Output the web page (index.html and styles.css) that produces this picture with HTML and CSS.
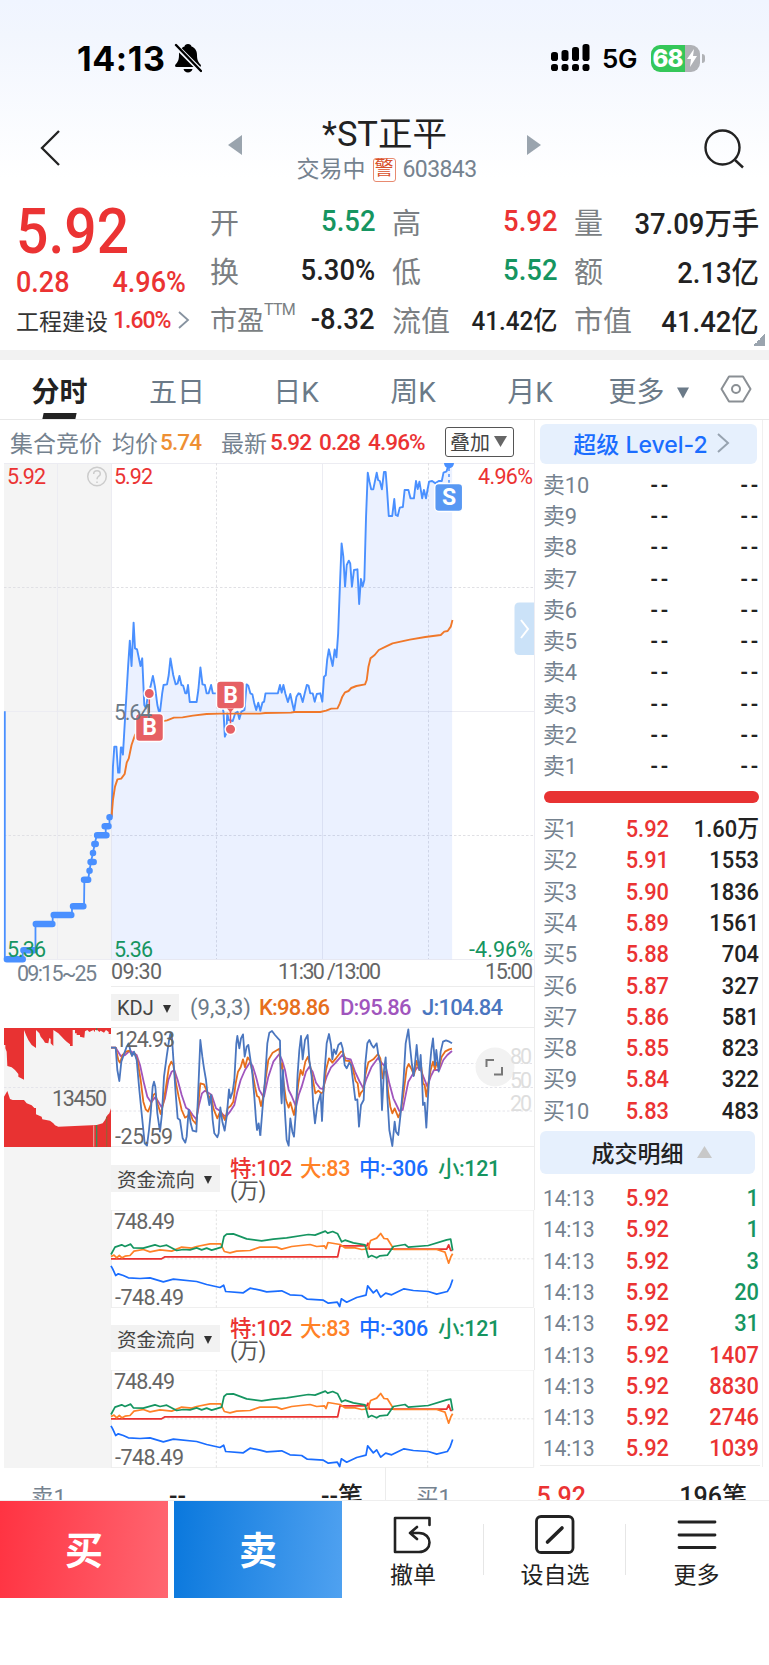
FILE: index.html
```html
<!DOCTYPE html>
<html lang="zh-CN">
<head>
<meta charset="utf-8">
<title>*ST正平 603843</title>
<link rel="stylesheet" href="styles.css">
</head>
<body>
<div class="app">
<header class="top">
  <div class="status">
    <span class="clock">14:13</span>
    <svg class="bell" width="28" height="30" viewBox="0 0 28 30"><path d="M14 1c2 0 3.300 1.200 3.500 2.600C21.500 5 23 8.500 23 12c0 5.500 1.600 7.500 3.500 9.500.8 1 .5 2.500-1 2.500h-23c-1.500 0-1.800-1.500-1-2.500C3.400 19.500 5 17.500 5 12c0-3.500 1.500-7 5.500-8.400C10.700 2.200 12 1 14 1zM9.500 26h9c-.5 2.200-2.300 3.500-4.500 3.500S10 28.200 9.500 26z"/><path d="M1 2l26 26" stroke="#f5f8fe" stroke-width="5"/><path d="M2 2l25 26" stroke="#000" stroke-width="2.400" stroke-linecap="round"/></svg>
    <svg class="signal" width="40" height="28" viewBox="0 0 40 28"><rect x="0" y="8" width="7" height="9" rx="2.800"/><rect x="10.500" y="6" width="7" height="11" rx="2.800"/><rect x="21" y="3" width="7" height="14" rx="2.800"/><rect x="31.500" y="0" width="7" height="17" rx="2.800"/><rect x="0" y="20" width="7" height="7" rx="2.800"/><rect x="10.500" y="20" width="7" height="7" rx="2.800"/><rect x="21" y="20" width="7" height="7" rx="2.800"/><rect x="31.500" y="20" width="7" height="7" rx="2.800"/></svg>
    <span class="net">5G</span>
    <div class="battery"><span>68</span><svg width="12" height="18" viewBox="0 0 12 18"><path d="M8 0L1 10h4l-1 8 7-11H7z" fill="#fff"/></svg></div>
  </div>
  <div class="title-bar">
    <svg class="back" width="22" height="38" viewBox="0 0 22 38"><path d="M20 2L3 19l17 17" fill="none" stroke="#222" stroke-width="2.300"/></svg>
    <svg class="prev" width="14" height="20" viewBox="0 0 14 20"><path d="M0 10L14 0v20z" fill="#9aa4ae"/></svg>
    <div class="name"><h1>*ST正平</h1><p><span>交易中</span><b>警</b><i>603843</i></p></div>
    <svg class="next" width="14" height="20" viewBox="0 0 14 20"><path d="M14 10L0 0v20z" fill="#9aa4ae"/></svg>
    <svg class="search" width="42" height="42" viewBox="0 0 42 42"><g fill="none" stroke="#222" stroke-width="2.400"><circle cx="19.500" cy="19.500" r="17"/><path d="M32 32l8 7.500"/></g></svg>
  </div>
</header>

<section class="quote">
  <div class="main">
    <div class="price">5.92</div>
    <div class="change"><span>0.28</span><span>4.96%</span></div>
    <div class="sector"><span>工程建设</span><i>1.60%</i><svg width="12" height="18" viewBox="0 0 12 18"><path d="M1 1l9 8-9 8" fill="none" stroke="#8793a0" stroke-width="1.800"/></svg></div>
  </div>
  <dl class="stats">
    <div><dt>开</dt><dd class="dn">5.52</dd></div><div><dt>高</dt><dd class="up">5.92</dd></div><div><dt>量</dt><dd>37.09万手</dd></div>
    <div><dt>换</dt><dd>5.30%</dd></div><div><dt>低</dt><dd class="dn">5.52</dd></div><div><dt>额</dt><dd>2.13亿</dd></div>
    <div><dt class="pe">市盈<sup>TTM</sup></dt><dd>-8.32</dd></div><div><dt>流值</dt><dd class="sm">41.42亿</dd></div><div><dt>市值</dt><dd>41.42亿</dd></div>
  </dl>
  <span class="corner"></span>
</section>

<nav class="tabs">
  <a class="on">分时</a><a>五日</a><a>日K</a><a>周K</a><a>月K</a><a>更多<svg width="12" height="12" viewBox="0 0 13 12"><path d="M0 0h13L6.500 12z" fill="#6b7a88"/></svg></a>
  <svg class="gear" width="32" height="28" viewBox="0 0 32 28"><g fill="none" stroke="#8a8f94" stroke-width="2"><path d="M9 1.500h14L30.500 14 23 26.500H9L1.500 14z" stroke-linejoin="round"/><circle cx="16" cy="14" r="4"/></g></svg>
</nav>

<main class="body">
<div class="left">
  <div class="info"><span class="w1">集合竞价</span><span class="w2">均价</span><b class="avg">5.74</b><span class="w3">最新</span><b class="n1">5.92</b><b class="n2">0.28</b><b class="n3">4.96%</b><button>叠加<svg width="13" height="11" viewBox="0 0 13 11"><path d="M0 0h13L6.500 11z" fill="#666"/></svg></button></div>
  <svg class="chart" width="535" height="523" viewBox="0 463 535 523">
    <rect x="4" y="463" width="107" height="497" fill="#f4f4f4"/>
    <g stroke="#ececf2" fill="none"><path d="M4 463.500H534M4 711.500H534M4 959.500H534M57.500 463V959M111.500 463V959M322.500 463V959M534.500 463V986"/><path d="M4 587.500H534M4 835.500H534M216.500 463V959M428.500 463V959" stroke="#e0e0e4" stroke-dasharray="2.500 2"/></g>
    <g transform="translate(0 400) scale(.344353 .333333)" fill="none" stroke-linejoin="round">
      <path fill="#4a80ff" fill-opacity=".11" d="M324 1250L328 1100 332 1040 338 1040 343 1118 347 1118 351 1042 357 1064 364 940 372 800 377 722 382 798 388 668 392 745 398 748 408 798 413 775 419 915 424 925 437 860 444 828 450 860 461 933 465 933 475 855 485 853 495 775 503 825 510 853 521 828 527 855 538 880 546 855 551 906 571 906 582 802 588 853 600 880 613 855 618 880 636 880 649 935 653 1010 660 940 676 963 690 935 710 930 716 853 727 880 744 930 750 908 756 932 771 880 807 880 818 860 829 882 836 906 843 882 854 933 867 880 879 906 891 855 901 880 914 905 936 905 941 830 955 748 966 798 972 748 977 772 982 700 992 430 1002 560 1013 482 1022 560 1028 510 1038 508 1043 612 1048 537 1058 540 1063 350 1068 218 1078 268 1084 268 1094 218 1109 268 1115 216 1120 216 1129 348 1139 348 1145 297 1155 348 1170 321 1175 270 1202 295 1208 243 1226 295 1246 245 1283 243 1303 190H1313V1678H324z"/>
      <path vector-effect="non-scaling-stroke" stroke="#4a90ff" stroke-width="1.900" d="M324 1250L328 1100 332 1040 338 1040 343 1118 347 1118 351 1042 353 1042 357 1064 364 940 372 800 377 722 382 798 388 668 392 745 398 748 408 798 413 775 419 915 424 925 430 880 437 860 444 828 450 860 457 915 461 933 465 933 471 880 475 855 485 853 490 825 495 775 503 825 510 853 516 850 521 828 527 855 532 857 538 880 542 880 546 855 551 906 571 906 576 870 582 802 588 853 595 855 600 880 606 880 613 855 618 880 627 880 636 880 642 906 649 935 653 1010 657 1000 660 940 664 960 676 963 683 940 690 935 695 957 701 935 710 930 716 853 721 857 727 880 733 883 738 908 744 930 750 908 756 932 762 908 767 905 771 880 807 880 813 855 818 878 823 855 829 882 836 906 843 882 848 906 854 933 861 890 867 880 872 882 879 906 885 880 891 855 896 857 901 880 908 880 914 905 920 882 930 880 936 905 941 830 946 826 950 780 955 748 966 798 972 748 977 772 982 700 987 560 992 430 997 470 1002 560 1007 495 1013 482 1017 490 1022 560 1028 510 1038 508 1043 612 1048 537 1053 560 1058 540 1063 350 1068 218 1073 245 1078 268 1084 268 1094 218 1098 240 1103 243 1109 268 1115 216 1120 216 1124 270 1129 348 1139 348 1145 297 1149 345 1155 348 1161 323 1170 321 1175 270 1186 270 1192 295 1202 295 1208 243 1213 267 1218 245 1226 295 1231 270 1237 295 1246 245 1255 243 1264 250 1274 243 1283 243 1288 218 1297 214 1303 192"/>
      <path vector-effect="non-scaling-stroke" stroke="#f0782a" stroke-width="1.900" d="M324 1250L328 1200 334 1160 341 1138 352 1136 362 1122 368 1088 374 1075 382 1035 392 1005 405 985 440 970 485 961 505 953 530 952 560 947 600 942 640 941 755 941 770 939 845 938 855 936 930 936 947 932 962 926 980 925 987 910 994 890 1002 877 1012 873 1020 864 1035 858 1060 853 1065 840 1070 800 1076 775 1088 765 1100 750 1120 740 1140 730 1190 719 1235 711 1280 705 1290 695 1300 693 1309 680 1314 660"/>
      <path vector-effect="non-scaling-stroke" stroke="#4a90ff" stroke-width="1.800" d="M14 934V1678H66V1651H103V1572H153V1545H209V1519H244L245 1439H256L260 1412 264 1386 270 1359 275 1332 281 1306H307V1279H318V1252"/>
      <path vector-effect="non-scaling-stroke" stroke="#4a90ff" stroke-width="6.500" stroke-linecap="round" d="M20 1678H66M68 1651H100M104 1572H152M156 1545H207M212 1519H242M244 1439H256M260 1412h.1M263 1386H272M270 1359h.1M274 1332H278M282 1306H309M304 1279H315M318 1252h.1"/>
    </g>
    <g fill="none" stroke="#ccc" stroke-width="1.500"><circle cx="97" cy="476.500" r="9.300"/><path d="M93.700 474c0-4.200 6.600-4.200 6.600 0 0 2.500-3.300 2-3.300 5.200M97 481.500v1.600"/></g>
    <g fill="#e66064" stroke="#fff" stroke-width="1.500"><path d="M149.300 694v20" stroke="#e5565b"/><circle cx="149.300" cy="693.500" r="5.200"/><rect x="135.500" y="713.500" width="28" height="28" rx="4"/><path d="M230.500 710v20" stroke="#e5565b"/><circle cx="230.500" cy="729.300" r="5.300"/><rect x="216.500" y="681" width="28" height="28" rx="4"/><path d="M227 708.500h7l-3.500 4z" stroke="none"/></g>
    <path d="M444 463h10c0 3-2 5-5 5.500-3-.5-5-2.500-5-5.500z" fill="#4a90ff"/><path d="M449 468v16" stroke="#4a90ff" stroke-width="1.500" stroke-dasharray="3 3"/>
    <rect x="434.700" y="483.500" width="28" height="28" rx="4" fill="#5898f3" stroke="#fff" stroke-width="1.500"/>
    <g class="axis">
      <text x="7" y="484" class="r" textLength="39">5.92</text><text x="114" y="484" class="r" textLength="39">5.92</text><text x="478" y="484" class="r" textLength="55">4.96%</text>
      <text x="114" y="720" textLength="38" fill="#6b7a88">5.64</text>
      <text x="7" y="957" class="g" textLength="39">5.36</text><text x="114" y="957" class="g" textLength="39">5.36</text><text x="469" y="957" class="g" textLength="64">-4.96%</text>
      <text x="17" y="981" fill="#75828f" textLength="80">09:15~25</text><text x="111" y="979" textLength="51">09:30</text><text x="278" y="979" textLength="103">11:30 /13:00</text><text x="485" y="979" textLength="48">15:00</text>
    </g>
    <g class="mark"><text x="149.500" y="735">B</text><text x="230.500" y="702.500">B</text><text x="449" y="504.500">S</text></g>
    <path d="M534 602.500H519.500q-5 0-5 5V650q0 5 5 5H534z" fill="#cbe2f8"/><path d="M521 620l7 9-7 9" fill="none" stroke="#fff" stroke-width="2"/>
  </svg>

  <div class="kdj-head"><span class="chip">KDJ<em></em></span><span class="p">(9,3,3)</span><span class="k">K:98.86</span><span class="d">D:95.86</span><span class="j">J:104.84</span></div>
  <svg class="chart" width="535" height="120" viewBox="0 1027 535 120">
    <rect x="4" y="1028" width="107" height="119" fill="#f4f4f4"/>
    <path d="M111 1027.500H534M111 1146.500H534M534.500 1027V1147" stroke="#ececec"/>
    <path d="M4 1087.500H534M111 1063.500H534M111 1111H534" stroke="#e4e4ea" stroke-dasharray="2.500 2"/>
    <g transform="translate(0 980) scale(.333333)" fill="none" stroke-linejoin="round">
      <path fill="#e83232" d="M12 144H333V162H326V156L318 150 312 158 302 152 298 156 292 150H285V157L280 150 268 156 262 150 255 154 253 173 240 170V165H230V160H225V150H218V198H210V193L200 185 192 178 185 170 175 160 160 150V198L152 190V177L148 174 145 190 135 188 130 180 122 170 118 160 108 150V204L95 195 85 180 78 165 72 150V299L55 290V282L45 270 35 262 22 258 20 215 16 205V195H12zM12 350L22 333 26 345 30 357 38 360H72L80 370 95 376 103 384H108V403L125 410 127 418 150 422 160 430 165 436 175 440 290 435 308 430 315 420 322 406 328 400 333 385V501H12z"/>
      <path d="M290 145v6M290 435V500" stroke="#3d8a56" stroke-width="4"/><path d="M281 436V500" stroke="#e8938d" stroke-width="4"/><path d="M320 410V500" stroke="#a05a36" stroke-width="4"/>
      <g stroke-width="5.400">
      <path stroke="#a055bd" d="M333 203H347L362 228 375 225 390 212 402 220 410 225 420 255 432 310 442 350 453 367 465 352 475 365 485 382 495 355 505 300 515 275 523 270 533 300 545 345 558 383 568 390 578 405 589 418 597 375 606 340 615 332 625 338 635 345 648 385 660 393 670 405 678 410 690 395 703 375 712 335 722 300 735 270 750 247 758 258 768 290 778 330 790 350"/>
      <path stroke="#a055bd" transform="translate(780)" d="M8 350H12L25 290 40 245 58 222 66 240 75 270 86 330 95 348 108 380 116 345 125 320 138 275 148 260 158 275 168 308 180 325 188 327 200 290 213 262 225 250 248 224 258 235 272 238 285 275 298 303 310 325 320 295 335 260 354 234 368 252 378 262 388 310 400 355 418 393 428 390 436 350 445 305 460 280 472 262 482 268 490 290 502 320 512 290 522 270 538 270 550 240 562 225 576 213"/>
      <path stroke="#e66e1c" d="M333 203H347L355 240 360 248 368 225 378 215 388 212 396 225 404 220 412 240 422 300 430 365 437 388 444 395 452 375 460 345 466 340 474 375 482 402 490 370 498 320 507 260 514 245 520 255 528 310 536 350 545 390 555 413 563 408 570 398 578 420 588 432 595 370 601 310 612 313 619 330 627 355 633 345 640 385 652 415 661 393 675 420 683 385 692 378 700 365 707 310 714 275 722 262 729 238 735 262 743 232 750 242 757 275 765 320 771 348 777 352 783 378 788 360"/>
      <path stroke="#e66e1c" transform="translate(780)" d="M3 378L8 360 15 310 25 240 38 218 58 206 63 265 66 250 70 300 78 360 86 383 91 367 102 405 108 370 115 310 122 270 128 285 136 245 144 230 150 255 158 295 166 340 175 332 184 340 190 335 198 270 207 235 217 248 228 235 243 215 249 215 256 242 268 243 278 265 287 303 293 310 298 350 303 338 310 330 316 285 325 247 340 238 354 222 361 235 368 295 373 275 378 275 385 340 391 380 397 400 404 385 415 412 422 395 430 345 440 265 446 252 455 268 462 285 470 243 478 270 484 262 489 310 494 315 499 350 505 310 512 270 519 245 525 268 530 248 537 265 545 230 556 214 568 208 576 206"/>
      <path stroke="#4a76bf" d="M333 203H347L352 270 358 303 364 245 370 228 380 200 386 190 392 215 396 228 402 215 410 240 418 330 428 430 434 490 441 497 447 450 452 400 458 320 462 305 466 320 472 400 480 455 486 400 492 290 500 230 508 175 512 158 516 175 521 250 527 340 533 415 540 420 548 475 556 488 560 470 566 390 572 430 578 452 589 455 594 350 601 180 607 230 612 265 618 300 623 345 628 375 633 345 638 420 643 460 652 472 656 460 661 382 667 425 674 452 680 410 687 328 691 355 698 335 703 300 709 190 712 168 718 205 723 175 729 163 734 230 740 200 745 195 750 230 757 280 763 350 768 420 771 450 776 430 781 467"/>
      <path stroke="#4a76bf" transform="translate(780)" d="M1 467L8 380 15 300 22 190 28 158 36 153 45 165 60 182 63 340 65 370 69 270 75 400 80 480 86 497 91 415 97 455 102 470 108 390 113 280 118 210 123 168 128 238 135 180 143 165 148 240 155 290 160 380 165 430 172 375 182 342 186 423 192 300 200 190 207 162 213 195 217 238 222 208 228 222 235 195 243 188 248 205 254 255 260 265 268 248 273 255 280 310 286 360 292 358 297 440 303 375 311 360 316 250 322 190 328 180 335 195 341 203 350 190 355 225 361 250 366 390 372 270 377 232 382 350 388 450 397 498 404 425 408 455 415 465 422 400 430 310 437 190 445 148 450 200 456 255 461 288 466 240 470 195 474 240 478 270 482 225 487 320 489 375 494 368 499 443 504 350 509 265 514 210 519 175 525 255 529 210 536 275 542 215 549 185 558 181 568 185 576 190"/>
      </g>
    </g>
    <circle cx="495" cy="1067" r="19.500" fill="#f2f2f2"/>
    <g class="axis"><text x="115" y="1047" textLength="60">124.93</text><text x="115" y="1144" textLength="58">-25.59</text><text x="52" y="1106" textLength="55">13450</text><g fill="#dedede"><text x="510" y="1063.500" textLength="22">80</text><text x="510" y="1087.500" textLength="22">50</text><text x="510" y="1111" textLength="22">20</text></g></g>
    <path d="M486.500 1067v-7h7.500M502 1067v7.500h-8" fill="none" stroke="#777" stroke-width="2"/>
  </svg>

  <div class="fund"><span class="chip">资金流向<em></em></span><p><b class="c1">特:102</b><b class="c2">大:83</b><b class="c3">中:-306</b><b class="c4">小:121</b><span>(万)</span></p></div>
  <svg class="chart flow" width="535" height="98" viewBox="0 1209.500 535 98">
    <defs><g id="flow">
      <path d="M33 178.500H1301M33 471.500H1301M34 178V471M667 178V471M1301 178V471" stroke="#ececec" stroke-width="3"/>
      <path d="M33 325H1300M349 178V471M983 178V471" stroke="#e2e2e2" stroke-width="3" stroke-dasharray="7 6"/>
      <g fill="none" stroke-width="5.200" stroke-linejoin="round">
      <path stroke="#e83232" d="M33 325H185L195 319H713L720 286H800L804 278 808 296H1040L1046 283 1052 300H1057"/>
      <path stroke="#ff8127" d="M33 318L42 314 50 322 58 315 66 322 75 317 90 315 102 302 130 297 150 304 180 298 215 302 245 290 275 293 290 288 330 280 362 280 373 303 390 307 410 302 450 300 480 290 530 290 545 296 575 288 630 282 650 288 673 286 678 294 684 276 720 282 735 292 765 292 785 297 803 295 812 270 830 263 842 249 852 264 862 265 882 297 1010 297 1035 305 1046 338 1053 318 1058 310"/>
      <path stroke="#169561" d="M33 312L45 290 65 283 75 288 92 281 100 292 130 293 165 283 180 288 200 284 230 300 250 297 270 298 290 292 305 298 320 293 335 299 365 290 372 258 380 251 400 250 440 265 485 271 520 266 560 262 625 252 645 254 676 242 683 248 698 243 713 250 725 274 735 269 760 277 795 283 805 320 815 315 830 322 840 316 862 314 880 288 915 282 925 290 985 285 1040 268 1052 266 1058 300"/>
      <path stroke="#1a6dff" d="M33 346L38 355 47 375 55 370 70 375 85 382 120 384 150 382 190 394 220 386 290 393 320 402 360 411 371 404 377 423 430 427 450 413 480 419 500 424 545 421 570 433 605 435 622 446 670 449 685 458 712 455 719 468 724 445 740 455 770 441 798 434 803 406 820 427 830 418 842 440 857 428 875 433 895 423 912 415 940 420 985 423 1010 431 1042 423 1050 410 1058 387"/></g>
    </g></defs>
    <use href="#flow" transform="translate(100 1150) scale(.333333)"/>
    <g class="axis"><text x="114" y="1228" textLength="61">748.49</text><text x="115" y="1304" textLength="69">-748.49</text></g>
  </svg>
  <div class="fund second"><span class="chip">资金流向<em></em></span><p><b class="c1">特:102</b><b class="c2">大:83</b><b class="c3">中:-306</b><b class="c4">小:121</b><span>(万)</span></p></div>
  <svg class="chart flow" width="535" height="98" viewBox="0 1209.500 535 98">
    <use href="#flow" transform="translate(100 1150) scale(.333333)"/>
    <g class="axis"><text x="114" y="1228" textLength="61">748.49</text><text x="115" y="1304" textLength="69">-748.49</text></g>
  </svg>
</div>

<aside class="book">
  <div class="level">超级 Level-2<svg width="13" height="20" viewBox="0 0 13 20"><path d="M1 1l10 9-10 9" fill="none" stroke="#97a3b0" stroke-width="2"/></svg></div>
  <ul class="rows sell">
    <li><span>卖10</span><b>--</b><i>--</i></li><li><span>卖9</span><b>--</b><i>--</i></li><li><span>卖8</span><b>--</b><i>--</i></li><li><span>卖7</span><b>--</b><i>--</i></li><li><span>卖6</span><b>--</b><i>--</i></li><li><span>卖5</span><b>--</b><i>--</i></li><li><span>卖4</span><b>--</b><i>--</i></li><li><span>卖3</span><b>--</b><i>--</i></li><li><span>卖2</span><b>--</b><i>--</i></li><li><span>卖1</span><b>--</b><i>--</i></li>
  </ul>
  <div class="ratio"></div>
  <ul class="rows buy">
    <li><span>买1</span><b>5.92</b><i>1.60万</i></li><li><span>买2</span><b>5.91</b><i>1553</i></li><li><span>买3</span><b>5.90</b><i>1836</i></li><li><span>买4</span><b>5.89</b><i>1561</i></li><li><span>买5</span><b>5.88</b><i>704</i></li><li><span>买6</span><b>5.87</b><i>327</i></li><li><span>买7</span><b>5.86</b><i>581</i></li><li><span>买8</span><b>5.85</b><i>823</i></li><li><span>买9</span><b>5.84</b><i>322</i></li><li><span>买10</span><b>5.83</b><i>483</i></li>
  </ul>
  <div class="detail">成交明细<svg width="15" height="12" viewBox="0 0 15 12"><path d="M7.500 0L15 12H0z" fill="#c8c8c8"/></svg></div>
  <ul class="rows trades">
    <li><span>14:13</span><b>5.92</b><i class="dn">1</i></li><li><span>14:13</span><b>5.92</b><i class="dn">1</i></li><li><span>14:13</span><b>5.92</b><i class="dn">3</i></li><li><span>14:13</span><b>5.92</b><i class="dn">20</i></li><li><span>14:13</span><b>5.92</b><i class="dn">31</i></li><li><span>14:13</span><b>5.92</b><i class="up">1407</i></li><li><span>14:13</span><b>5.92</b><i class="up">8830</i></li><li><span>14:13</span><b>5.92</b><i class="up">2746</i></li><li><span>14:13</span><b>5.92</b><i class="up">1039</i></li>
  </ul>
</aside>
</main>

<section class="peek">
  <div><span>卖1</span><b>--</b><i>--笔</i></div>
  <div><span>买1</span><b class="up">5.92</b><i>196笔</i></div>
</section>

<footer class="bar">
  <button class="buy-btn">买</button><button class="sell-btn">卖</button>
  <a><svg width="42" height="40" viewBox="0 0 42 40"><g fill="none" stroke="#222" stroke-width="2.600" stroke-linecap="round" stroke-linejoin="round"><path d="M37.500 10V3H3v34h24c14 0 14-19 0-19H18M25 12l-7 6 7 6"/></g></svg>撤单</a>
  <a><svg width="42" height="40" viewBox="0 0 42 40"><rect x="2.500" y="1.500" width="36.500" height="36" rx="4.500" fill="none" stroke="#222" stroke-width="2.800"/><path d="M13.500 27L28 13" stroke="#222" stroke-width="3.600" stroke-linecap="round"/></svg>设自选</a>
  <a><svg width="42" height="40" viewBox="0 0 42 40"><path d="M3 7h36M3 20h36M3 32.500h36" stroke="#222" stroke-width="2.800" stroke-linecap="round"/></svg>更多</a>
</footer>
</div>
</body>
</html>
```

FILE: styles.css
```css
* { box-sizing: border-box; margin: 0; padding: 0; }
body { width: 769px; height: 1665px; overflow: hidden; background: #fff; color: #222; font-family: Roboto, "Noto Sans CJK SC", sans-serif; }
i, em { font-style: normal; }
b { font-weight: 500; }
ul { list-style: none; }
svg { display: block; flex: none; }
button { border: 0; background: none; font: inherit; }
.app { display: flex; flex-direction: column; height: 1665px; }
.up { color: #eb3333 !important; }
.dn { color: #169561 !important; }

.top { height: 190px; background: linear-gradient(#f0f5ff 0, #f2f6fe 35px, #fff 178px); }
.status { display: flex; align-items: center; height: 116px; padding: 0 65px 0 77px; }
.clock { width: 97px; font: 700 34px Inter, sans-serif; letter-spacing: .6px; color: #000; }
.signal { margin-left: 349px; }
.net { margin-left: 11px; width: 48.500px; font: 600 26px Inter, sans-serif; letter-spacing: -.3px; color: #000; }
.battery { position: relative; display: flex; align-items: center; width: 49px; height: 27px; padding-left: 2px; border-radius: 9px; background: linear-gradient(90deg, #35c759 34px, #b0b2b6 34px); font: 800 24px Inter, sans-serif; letter-spacing: -1px; color: #fff; }
.battery span { width: 33px; }
.battery::after { content: ""; position: absolute; left: 51px; top: 9px; width: 3px; height: 9px; border-radius: 0 3px 3px 0; background: #b0b2b6; }
.title-bar { display: flex; padding: 0 23px 0 39px; }
.back { margin-top: 13px; }
.prev { margin: 19px 0 0 167px; }
.name { width: 285px; height: 74px; text-align: center; }
.name h1 { margin: -4px 0 0; font-size: 34.500px; line-height: 44px; font-weight: 400; }
.name p { display: flex; justify-content: center; align-items: center; gap: 7px; height: 26px; margin: 1px 0 0 4px; font-size: 23px; line-height: 26px; color: #75828f; }
.name p b { width: 23px; height: 24px; border: 1.500px solid #e88a70; border-radius: 3px; font-size: 19px; line-height: 20px; font-weight: 400; color: #d8502a; }
.name p i { letter-spacing: -.6px; }
.next { margin-top: 19px; }
.search { margin: 12px 0 0 162px; }

.quote { position: relative; display: flex; height: 160px; padding-left: 16px; }
.main { width: 194px; color: #eb3333; }
.price { height: 73px; padding-top: 5px; font-size: 63px; line-height: 74px; font-weight: 500; transform: scaleX(.905); transform-origin: left; }
.change { display: flex; justify-content: space-between; width: 170px; height: 41px; font-size: 29px; line-height: 39px; font-weight: 500; }
.change span { transform: scaleX(.93); transform-origin: left; }
.change span + span { transform-origin: right; }
.sector { display: flex; align-items: center; height: 34px; margin-top: -1px; font-size: 23px; color: #333; }
.sector i { margin: 1px 7px 0 5px; color: #eb3333; letter-spacing: -1px; font-weight: 500; }
.stats { display: grid; grid-template-columns: 165px 165px 185px; column-gap: 17px; grid-template-rows: repeat(3, 49px); padding-top: 6px; }
.stats > div { display: flex; justify-content: space-between; align-items: center; }
.stats dt { font-size: 29px; color: #7b7f83; font-weight: 400; white-space: nowrap; }
.stats dd { font-size: 29.500px; font-weight: 500; transform: scaleX(.93); transform-origin: right; white-space: nowrap; }
.stats dd.sm { font-size: 26px; }
.stats .pe { display: flex; font-size: 27px; }
.pe sup { font-size: 16px; line-height: 22px; letter-spacing: -.7px; }
.corner { position: absolute; left: 753px; top: 144px; width: 12px; height: 12px; background: linear-gradient(135deg, transparent 50%, #9aa4ae 50%); }

.tabs { position: relative; display: grid; grid-template-columns: 117px 118px 120px 117px 119px 117px auto; align-items: center; height: 70px; padding: 1px 0 0 1px; border-top: 10px solid #f2f2f2; border-bottom: 1px solid #e8e8e8; font-size: 28px; color: #6b7a88; }
.tabs a { display: flex; justify-content: center; align-items: center; white-space: nowrap; }
.tabs a:nth-child(6) { gap: 12px; margin-left: -4px; }
.tabs a:nth-child(6) svg { margin-top: 5px; }
.tabs a:nth-child(5) { margin-left: -5px; }
.tabs a:nth-child(4) { margin-left: -3px; }
.tabs .on { color: #222; font-weight: 700; }
.tabs .on::after { content: ""; position: absolute; left: 43px; bottom: 0; width: 33px; height: 6px; background: #222; transform: skewX(-12deg); }
.gear { margin: -3px 0 0 11px; }

.body { display: flex; height: 1047px; }
.left { width: 535px; }
.info { display: flex; align-items: center; height: 43px; padding: 0 0 0 10px; border-right: 1px solid #ececec; font-size: 23px; color: #75828f; }
.info b { font-size: 22.500px; letter-spacing: -.9px; color: #eb3333; padding-top: 1px; }
.w1 { width: 102px; } .w2 { width: 48px; } .info .avg { width: 61px; color: #ee8f33; } .w3 { width: 49px; }
.n1 { width: 49px; } .n2 { width: 49px; } .n3 { width: 77px; }
.info button { display: flex; align-items: center; gap: 4px; width: 69px; height: 30px; padding-left: 4px; border: 1px solid #555; border-radius: 3px; font-size: 20px; color: #444; white-space: nowrap; }
.axis { font-size: 21.500px; fill: #666; }
.axis .r { fill: #eb3333; } .axis .g { fill: #169561; }
.mark { font: 700 23px Roboto, sans-serif; fill: #fff; text-anchor: middle; }
.kdj-head { display: flex; align-items: center; height: 41px; margin-left: 111px; padding-top: 1px; border: solid #ececec; border-width: 1.500px 1px 0 0; font-size: 22px; white-space: nowrap; }
.chip { display: flex; align-items: center; justify-content: space-between; height: 27px; padding: 0 8px 0 6px; background: #f2f2f2; font-size: 20px; color: #444; }
.chip em { margin-top: 3px; border: 4px solid transparent; border-top: 8px solid #333; border-bottom: 0; }
.kdj-head .chip { width: 68px; }
.kdj-head .p { width: 69px; margin-left: 11px; color: #6b7a88; }
.kdj-head .k { width: 81px; color: #e66e1c; } .kdj-head .d { width: 82px; color: #a055bd; } .kdj-head .j { color: #4a76bf; }
.k, .d, .j { letter-spacing: -.8px; font-weight: 500; }
.fund { display: flex; height: 62.500px; padding-left: 107px; margin-left: 4px; background: linear-gradient(90deg, #f4f4f4 107px, #fff 107px); border-right: 1px solid #ececec; }
.flow { background: linear-gradient(90deg, #fff 4px, #f4f4f4 4px 111px, #fff 111px); }
.fund .chip { width: 109px; margin-top: 18px; font-size: 19.500px; }
.fund p { display: flex; flex-wrap: wrap; align-content: flex-start; width: 290px; margin: 10px 0 0 10px; font-size: 21.500px; line-height: 23px; color: #555; }
.fund.second .chip { margin-top: 17px; }
.fund.second p { margin-top: 9px; }
.fund p b { letter-spacing: -.4px; }
.fund p span { width: 100%; line-height: 22px; }
.c1 { width: 70px; color: #eb3333; } .c2 { width: 59px; color: #ff8127; } .c3 { width: 79px; color: #1a6dff; } .c4 { color: #169561; }

.book { width: 228px; border-right: 1px solid #f0f0f0; padding: 3px 2px 0 5px; }
.level { display: flex; align-items: center; justify-content: center; gap: 9px; width: 217px; height: 39.500px; padding: 0 0 2px 6px; margin-top: 1px; border-radius: 6px; background: #e6f0fd; font-family: Inter, "Noto Sans CJK SC", sans-serif; font-size: 23px; font-weight: 500; color: #1a6dff; white-space: nowrap; }
.rows li { display: grid; grid-template-columns: 60px 66px 90px; align-items: center; height: 31.300px; font-size: 23.500px; padding-left: 3px; line-height: 31px; white-space: nowrap; }
.rows span { color: #75828f; font-size: 22.500px; transform: scaleX(.97); transform-origin: left; }
.rows b { text-align: right; color: #eb3333; transform: scaleX(.93); transform-origin: right; }
.rows i { text-align: right; font-weight: 500; transform: scaleX(.93); transform-origin: right; }
.sell { padding-top: 6px; }
.sell li b, .sell li i { color: #222; letter-spacing: 3px; margin-right: -2px; }
.ratio { width: 215px; height: 12px; margin: 8.500px 0 11px 4px; border-radius: 6px; background: #e83232; }
.detail { display: flex; justify-content: center; align-items: center; gap: 13px; width: 215px; height: 42.500px; margin-top: 4.500px; padding: 0 0 1px 8px; border-radius: 6px; background: #e6f0fd; font-size: 23px; font-weight: 500; }
.trades { padding-top: 9px; border-bottom: 1px solid #ececec; height: 292px; }
.trades li span { transform: scaleX(.92); }

.peek { display: flex; height: 34px; overflow: hidden; border-bottom: 1px solid #eee; }
.peek > div { display: grid; grid-template-columns: 60px 95px 1fr; width: 385px; padding: 15px 22px 0 31px; font-size: 25px; line-height: 30px; white-space: nowrap; }
.peek > div + div { border-left: 1px solid #ececec; width: 384px; padding-left: 30px; }
.peek > div + div b { padding-right: 0; margin-right: -15px; }
.peek span { color: #75828f; font-size: 22.500px; }
.peek b { text-align: right; } .peek i { text-align: right; font-weight: 500; }
.bar { display: flex; height: 97px; }
.buy-btn, .sell-btn { width: 168px; padding-bottom: 4px; color: #fff; font-size: 38px; font-weight: 700; background: linear-gradient(95deg, #ff3342, #ff6671); }
.sell-btn { margin-left: 6px; background: linear-gradient(95deg, #0a78dd, #4fa1f0); }
.bar a { position: relative; display: flex; flex-direction: column; align-items: center; width: 142px; padding-top: 14px; font-size: 23px; line-height: 41px; }
.bar a:last-of-type { width: 141px; }
.bar a + a::before { content: ""; position: absolute; left: -1px; top: 23px; width: 1px; height: 51px; background: #e6e6e6; }
```
